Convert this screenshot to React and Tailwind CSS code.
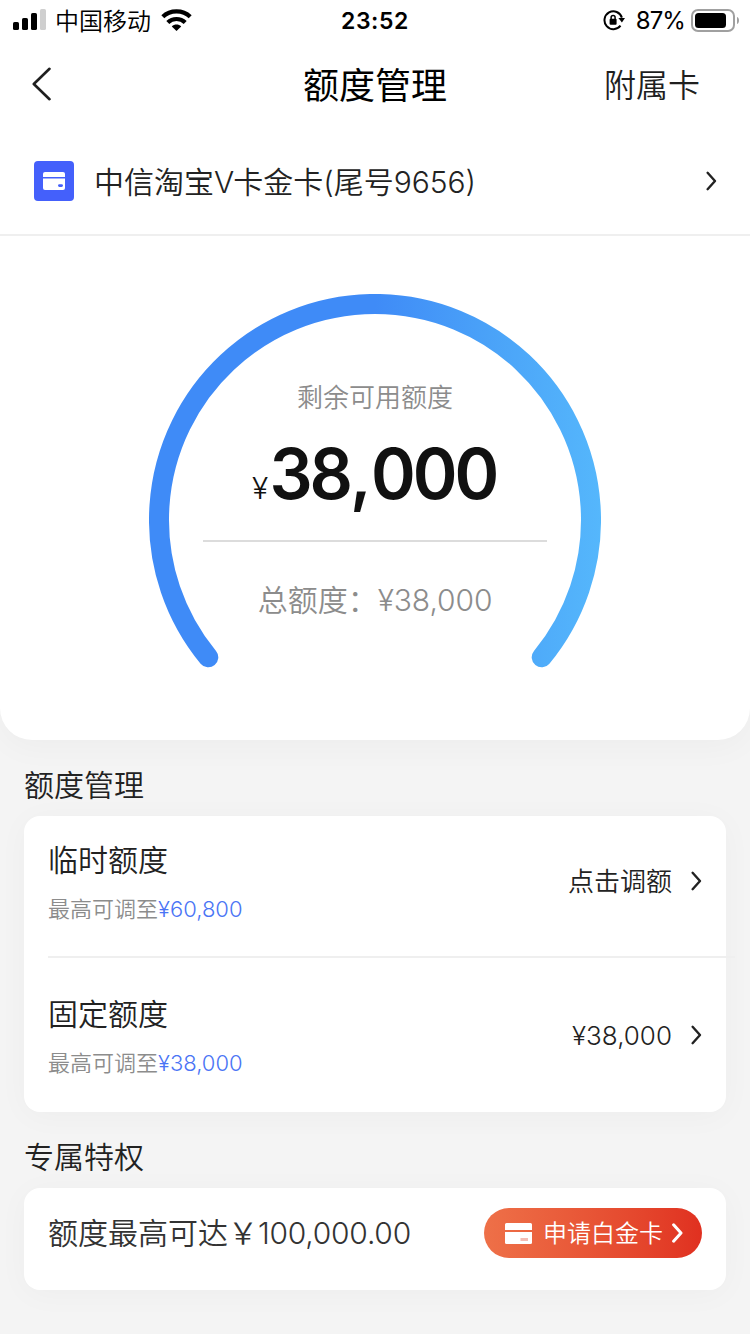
import React from 'react';

const Chevron = ({ className = '', strokeWidth = 2.4 }) => (
  <svg className={className} width="12" height="22" viewBox="0 0 12 22" fill="none" stroke="currentColor" strokeWidth={strokeWidth} strokeLinecap="round" strokeLinejoin="round">
    <path d="M2.6 2.8L10 11L2.6 19.2" />
  </svg>
);

const StatusBar = () => (
  <div className="flex h-10 items-center justify-between text-black">
    <div className="flex w-[300px] items-center pl-[13px]">
      <svg width="33" height="22" viewBox="0 0 33 22">
        <rect x="0" y="13" width="6" height="8" rx="1.6" />
        <rect x="9" y="9" width="6" height="12" rx="1.6" />
        <rect x="18" y="4" width="6" height="17" rx="1.6" />
        <rect x="27" y="0" width="6" height="21" rx="1.6" fill="#cfcfcf" />
      </svg>
      <span className="ml-[9px] pt-[3px] text-[24px] leading-[37px]">中国移动</span>
      <svg className="ml-[10px]" width="31" height="22" viewBox="0 0 31 22" fill="none" stroke="#000" strokeWidth="4.2">
        <path d="M1.8 7.8C9.2 0.6 21.8 0.6 29.2 7.8" />
        <path d="M6.8 13.6C11.6 8.8 19.4 8.8 24.2 13.6" />
        <path d="M15.5 22L10.8 17.4C13.4 14.9 17.6 14.9 20.2 17.4Z" fill="#000" stroke="none" />
      </svg>
    </div>
    <span className="pt-[2px] text-[23px] leading-[38px] font-semibold tracking-[0.6px]">23:52</span>
    <div className="flex w-[300px] items-center justify-end pr-[10px]">
      <svg width="22" height="22" viewBox="0 0 22 22" fill="none">
        <path d="M17.5 16.6A8.9 8.9 0 1 1 18.9 8.6" stroke="#000" strokeWidth="2" />
        <path d="M15.4 9H22L18.9 13.6Z" fill="#000" />
        <rect x="6.6" y="9.8" width="7" height="6" rx="1" fill="#000" />
        <path d="M8.1 10.4V8.4A2 2 0 0 1 12.1 8.4V10.4" stroke="#000" strokeWidth="1.5" />
      </svg>
      <span className="ml-[11px] pt-[2px] text-[24px] leading-[38px] font-normal tracking-[-0.9px]">87%</span>
      <svg className="ml-[6px]" width="49" height="23" viewBox="0 0 49 23">
        <rect x="1" y="1" width="42" height="21" rx="6" fill="none" stroke="#a0a0a0" strokeWidth="2" />
        <rect x="4" y="4" width="31" height="15" rx="3.5" fill="#000" />
        <path d="M46 8V15C47.6 14.4 48 12.8 48 11.5S47.6 8.6 46 8Z" fill="#a0a0a0" />
      </svg>
    </div>
  </div>
);

const Header = () => (
  <div className="flex h-[88px] items-center justify-between pr-[50px] pl-8 text-[#1f1f1f]">
    <div className="w-[120px]">
      <svg width="20" height="34" viewBox="0 0 20 34" fill="none" stroke="currentColor" strokeWidth="2.6" strokeLinecap="round" strokeLinejoin="round">
        <path d="M17.5 1.8L1.8 17L17.5 32.2" />
      </svg>
    </div>
    <h1 className="ml-[18px] pt-1 text-[36px] leading-[50px] font-normal text-black">额度管理</h1>
    <div className="w-[120px] pt-1 text-right text-[32px] leading-[44px]">附属卡</div>
  </div>
);

const CardPicker = () => (
  <div className="flex h-[108px] items-center border-b-2 border-[#efefef] pr-[33px] pl-[34px] text-[#222]">
    <div className="flex h-10 w-10 items-center justify-center rounded bg-[#4460fb]">
      <svg width="22" height="18" viewBox="0 0 22 18">
        <path d="M2 0H20A2 2 0 0 1 22 2V5H0V2A2 2 0 0 1 2 0Z" fill="#fff" />
        <path d="M0 6.5H22V16A2 2 0 0 1 20 18H2A2 2 0 0 1 0 16Z" fill="#fff" />
        <rect x="15" y="12.2" width="5" height="2.8" rx="1.4" fill="#4460fb" />
      </svg>
    </div>
    <span className="ml-5 flex-1 pt-[2px] text-[30px] leading-[44px]">
      中信淘宝<span className="tracking-[-1px]">V</span>卡金卡(尾号9656)
    </span>
    <Chevron />
  </div>
);

const Gauge = () => (
  <div className="flex h-[504px] justify-center pt-[58px]">
    <div className="relative h-[374px] w-[452px]">
      <svg className="absolute inset-0" width="452" height="374" viewBox="0 0 452 374" fill="none">
        <defs>
          <linearGradient id="arc" gradientUnits="userSpaceOnUse" x1="226" y1="0" x2="452" y2="0">
            <stop offset="0" stopColor="#3f8bf7" />
            <stop offset="0.5" stopColor="#4aa2f8" />
            <stop offset="1" stopColor="#55b7fc" />
          </linearGradient>
        </defs>
        <path d="M59.3 363.3A216 216 0 1 1 392.7 363.3" stroke="url(#arc)" strokeWidth="20" strokeLinecap="round" />
      </svg>
      <div className="flex flex-col items-center pt-[85px]">
        <div className="text-[26px] leading-[38px] text-[#8c8c8c]">剩余可用额度</div>
        <div className="mt-[15px] flex items-baseline pl-[2px] text-[#111]">
          <span className="text-[30px] leading-[84px] tracking-[-2px]">¥</span>
          <span className="inline-block scale-x-[0.97] text-[70px] leading-[84px] font-semibold tracking-[-3.2px]">
            38<span className="tracking-[-0.6px]">,</span>000
          </span>
        </div>
        <div className="mt-[10px] h-[2px] w-[344px] bg-[#dcdcdc]" />
        <div className="mt-[36px] text-[30px] leading-[44px] text-[#8c8c8c]">总额度：<span className="tracking-[-0.1px]">¥38,000</span></div>
      </div>
    </div>
  </div>
);

const LimitRow = ({ title, amount, action }) => (
  <div className="flex h-[154px] items-start justify-between pt-[22px] pr-6">
    <div>
      <h3 className="text-[30px] leading-[44px] text-[#222]">{title}</h3>
      <p className="mt-[11px] text-[22px] leading-8 text-[#8c8c8c]">
        最高可调至<span className="text-[#4a74f5]">{amount}</span>
      </p>
    </div>
    <div className="flex items-center pt-[23px] text-[#222]">
      <span className="mr-[18px] pt-[2px] text-[26px] leading-[38px]">{action}</span>
      <Chevron />
    </div>
  </div>
);

const SectionTitle = ({ children }) => (
  <h2 className="text-[30px] leading-[44px] text-[#222]">{children}</h2>
);

const App = () => {
  return (
    <div className="h-[1334px] w-[750px] overflow-hidden bg-[#f4f4f4] font-['Inter','Noto_Sans_CJK_SC',sans-serif] [font-weight:350] whitespace-nowrap">
      <div className="rounded-b-[32px] bg-white shadow-[0_8px_32px_rgba(0,0,0,0.03)]">
        <StatusBar />
        <Header />
        <CardPicker />
        <Gauge />
      </div>

      <div className="px-6 pt-[23px]">
        <SectionTitle>额度管理</SectionTitle>
        <div className="mt-[9px] h-[296px] rounded-2xl bg-white pl-6 shadow-[0_4px_32px_rgba(0,0,0,0.03)]">
          <div className="h-[140px]">
            <LimitRow title="临时额度" amount="¥60,800" action="点击调额" />
          </div>
          <div className="h-[2px] w-[687px] bg-[#efefef]" />
          <div className="pt-3">
            <LimitRow title="固定额度" amount="¥38,000" action="¥38,000" />
          </div>
        </div>

        <div className="pt-[23px]">
          <SectionTitle>专属特权</SectionTitle>
        </div>
        <div className="mt-[9px] flex h-[102px] items-start justify-between rounded-2xl bg-white px-6 pt-5 shadow-[0_4px_32px_rgba(0,0,0,0.03)]">
          <span className="text-[30px] leading-[50px] text-[#333]">额度最高可达￥<span className="tracking-[-0.25px]">100,000.00</span></span>
          <button className="flex h-[50px] w-[218px] items-center rounded-full bg-linear-to-r from-[#ee7048] to-[#e03020] pl-[21px] text-white">
            <svg width="27" height="21" viewBox="0 0 27 21">
              <path d="M1.5 0H25.5A1.5 1.5 0 0 1 27 1.5V7H0V1.5A1.5 1.5 0 0 1 1.5 0Z" fill="#fff" />
              <path d="M0 9H27V19.5A1.5 1.5 0 0 1 25.5 21H1.5A1.5 1.5 0 0 1 0 19.5Z" fill="#fff" />
              <rect x="15.5" y="15" width="7.5" height="3" fill="#f4bcb4" />
            </svg>
            <span className="ml-[11px] pt-[2px] text-[24px] leading-[48px]">申请白金卡</span>
            <Chevron className="ml-[8px]" strokeWidth={3} />
          </button>
        </div>
      </div>
    </div>
  );
};

export default App;
